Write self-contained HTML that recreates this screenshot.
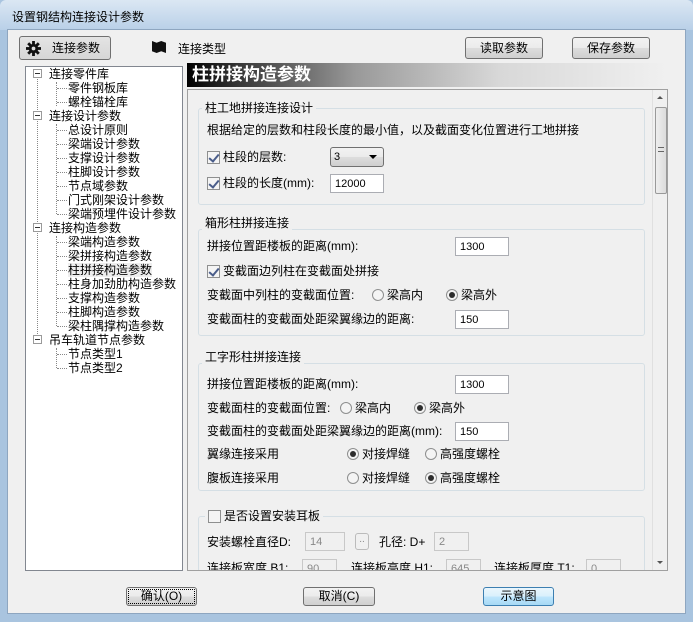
<!DOCTYPE html><html><head><meta charset="utf-8"><style>
*{box-sizing:border-box;margin:0;padding:0}
body{width:693px;height:622px;position:relative;overflow:hidden;background:#a9c4df;font-family:"Liberation Sans","Noto Sans CJK SC",sans-serif;font-size:12px;color:#000}
.a{position:absolute;white-space:nowrap}
.btn{position:absolute;border:1px solid #707070;border-radius:3px;background:linear-gradient(#f2f2f2,#ebebeb 50%,#dddddd 51%,#cfcfcf);text-align:center;font-size:12px}
.in{position:absolute;background:#fff;border:1px solid #abadb3;height:19px;padding:3px 4px;font-size:11px;line-height:12px}
.dis{background:#f0f0f0;color:#888;border-color:#c8c8c8}
.gb{position:absolute;border:1px solid #d5dfe5;border-radius:3px}
.gl{position:absolute;background:#f0f0f0;padding:0 3px;white-space:nowrap;display:flex;align-items:center;line-height:14px}
.cb{display:inline-block;flex:none;width:13px;height:13px;border:1px solid #8e8f8f;background:#f4f4f4;margin-right:3px;position:relative}
.cb.on:after{content:"";position:absolute;left:3px;top:0px;width:4px;height:8px;border:solid #4a5d8a;border-width:0 2px 2px 0;transform:rotate(40deg)}
.rd{display:inline-block;flex:none;width:12px;height:12px;border:1px solid #8e8f8f;border-radius:50%;background:#f4f4f4;margin-right:3px;position:relative}
.rd.on:after{content:"";position:absolute;left:2px;top:2px;width:6px;height:6px;border-radius:50%;background:#2d2d2d}
.t{position:absolute;white-space:nowrap;line-height:14px;display:flex;align-items:center}
</style></head><body>
<div class="a" style="left:0;top:0;width:693px;height:30px;background:linear-gradient(#dbe7f3,#b9d0e8);border-radius:6px 6px 0 0"></div>
<div class="a" style="left:12px;top:8px;font-size:12px">设置钢结构连接设计参数</div>
<div class="a" style="left:7px;top:29px;width:679px;height:585px;background:#f0f0f0;border:1px solid #8ea6c0"></div>
<div class="btn" style="left:19px;top:36px;width:92px;height:24px;background:linear-gradient(#e4e4e4,#d6d6d6);line-height:22px;padding-left:22px">连接参数</div>
<svg class="a" style="left:26px;top:41px" width="15" height="15" viewBox="0 0 16 16"><g fill="#111"><circle cx="8" cy="8" r="5"/><rect x="6.5" y="0" width="3" height="16"/><rect x="0" y="6.5" width="16" height="3"/><rect x="6.5" y="0" width="3" height="16" transform="rotate(45 8 8)"/><rect x="6.5" y="0" width="3" height="16" transform="rotate(-45 8 8)"/></g><circle cx="8" cy="8" r="2" fill="#ddd"/></svg>
<div class="a" style="left:152px;top:41px;width:14px;height:12px;background:#111;clip-path:polygon(0 0,33% 15%,66% 0,100% 15%,100% 100%,66% 85%,33% 100%,0 85%)"></div>
<div class="a" style="left:178px;top:40px">连接类型</div>
<div class="btn" style="left:465px;top:37px;width:78px;height:22px;line-height:20px">读取参数</div>
<div class="btn" style="left:572px;top:37px;width:78px;height:22px;line-height:20px">保存参数</div>
<div class="a" style="left:25px;top:66px;width:158px;height:505px;background:#fff;border:1px solid #828790"></div>
<div class="a" style="left:37px;top:76px;height:262px;border-left:1px dotted #888"></div>
<div class="a" style="left:56px;top:82px;height:24px;border-left:1px dotted #888"></div>
<div class="a" style="left:56px;top:124px;height:90px;border-left:1px dotted #888"></div>
<div class="a" style="left:56px;top:236px;height:90px;border-left:1px dotted #888"></div>
<div class="a" style="left:56px;top:348px;height:20px;border-left:1px dotted #888"></div>
<div id="tree"></div>
<script>
var it=[[0,"连接零件库"],[1,"零件钢板库"],[1,"螺栓锚栓库"],[0,"连接设计参数"],[1,"总设计原则"],[1,"梁端设计参数"],[1,"支撑设计参数"],[1,"柱脚设计参数"],[1,"节点域参数"],[1,"门式刚架设计参数"],[1,"梁端预埋件设计参数"],[0,"连接构造参数"],[1,"梁端构造参数"],[1,"梁拼接构造参数"],[1,"柱拼接构造参数"],[1,"柱身加劲肋构造参数"],[1,"支撑构造参数"],[1,"柱脚构造参数"],[1,"梁柱隅撑构造参数"],[0,"吊车轨道节点参数"],[1,"节点类型1"],[1,"节点类型2"]];
var h="";it.forEach(function(e,i){var y=67+i*14;if(e[0]==0){h+='<div class="a" style="left:33px;top:'+(y+2)+'px;width:9px;height:9px;border:1px solid #9a9a9a;background:#fff"><div class="a" style="left:1px;top:3px;width:5px;border-top:1px solid #333"></div></div><div class="t" style="left:49px;top:'+y+'px">'+e[1]+'</div>';}else{h+='<div class="a" style="left:57px;top:'+(y+7)+'px;width:10px;border-top:1px dotted #888"></div><div class="t" style="left:68px;top:'+y+'px;'+(i==14?'background:#eee':'')+'">'+e[1]+'</div>';}});document.getElementById("tree").innerHTML=h;
</script>
<div class="a" style="left:187px;top:63px;width:480px;height:24px;background:linear-gradient(90deg,#000 0,#333 10%,#999 35%,#d8d8d8 65%,#f0f0f0);color:#fff;font-size:17px;font-weight:bold;line-height:24px;padding-left:5px">柱拼接构造参数</div>
<div class="a" style="left:187px;top:89px;width:481px;height:482px;border:1px solid #a0a0a0;overflow:hidden">
<div class="a" style="left:464px;top:0;width:16px;height:480px;background:#f0f0f0;border-left:1px solid #e0e0e0"></div>
<div class="a" style="left:469px;top:6px;width:0;height:0;border:3px solid transparent;border-bottom:3px solid #555;border-top:0"></div>
<div class="a" style="left:467px;top:17px;width:12px;height:87px;border:1px solid #999;border-radius:2px;background:linear-gradient(90deg,#eee,#dcdcdc)"></div>
<div class="a" style="left:470px;top:57px;width:6px;height:5px;border-top:1px solid #666;border-bottom:1px solid #666"></div>
<div class="a" style="left:469px;top:471px;width:0;height:0;border:3px solid transparent;border-top:3px solid #555;border-bottom:0"></div>
</div>
<div class="gb" style="left:198px;top:108px;width:447px;height:97px"></div><div class="gl" style="left:202px;top:101px">柱工地拼接连接设计</div>
<div class="t" style="left:207px;top:123px">根据给定的层数和柱段长度的最小值，以及截面变化位置进行工地拼接</div>
<div class="t" style="left:207px;top:150px"><span class="cb on"></span>柱段的层数:</div>
<div class="btn" style="left:330px;top:147px;width:54px;height:20px;text-align:left;padding-left:3px;line-height:18px;font-size:11px">3<span style="position:absolute;right:6px;top:7px;border:4px solid transparent;border-top:4px solid #000;border-bottom:0"></span></div>
<div class="t" style="left:207px;top:176px"><span class="cb on"></span>柱段的长度(mm):</div>
<div class="in" style="left:330px;top:174px;width:54px">12000</div>
<div class="gb" style="left:198px;top:229px;width:447px;height:107px"></div><div class="gl" style="left:202px;top:216px">箱形柱拼接连接</div>
<div class="t" style="left:207px;top:239px">拼接位置距楼板的距离(mm):</div><div class="in" style="left:455px;top:237px;width:54px">1300</div>
<div class="t" style="left:207px;top:264px"><span class="cb on"></span>变截面边列柱在变截面处拼接</div>
<div class="t" style="left:207px;top:288px">变截面中列柱的变截面位置:</div>
<div class="t" style="left:372px;top:288px"><span class="rd"></span>梁高内</div><div class="t" style="left:446px;top:288px"><span class="rd on"></span>梁高外</div>
<div class="t" style="left:207px;top:312px">变截面柱的变截面处距梁翼缘边的距离:</div><div class="in" style="left:455px;top:310px;width:54px">150</div>
<div class="gb" style="left:198px;top:363px;width:447px;height:128px"></div><div class="gl" style="left:202px;top:350px">工字形柱拼接连接</div>
<div class="t" style="left:207px;top:377px">拼接位置距楼板的距离(mm):</div><div class="in" style="left:455px;top:375px;width:54px">1300</div>
<div class="t" style="left:207px;top:401px">变截面柱的变截面位置:</div>
<div class="t" style="left:340px;top:401px"><span class="rd"></span>梁高内</div><div class="t" style="left:414px;top:401px"><span class="rd on"></span>梁高外</div>
<div class="t" style="left:207px;top:424px">变截面柱的变截面处距梁翼缘边的距离(mm):</div><div class="in" style="left:455px;top:422px;width:54px">150</div>
<div class="t" style="left:207px;top:447px">翼缘连接采用</div>
<div class="t" style="left:347px;top:447px"><span class="rd on"></span>对接焊缝</div><div class="t" style="left:425px;top:447px"><span class="rd"></span>高强度螺栓</div>
<div class="t" style="left:207px;top:471px">腹板连接采用</div>
<div class="t" style="left:347px;top:471px"><span class="rd"></span>对接焊缝</div><div class="t" style="left:425px;top:471px"><span class="rd on"></span>高强度螺栓</div>
<div class="a" style="left:188px;top:500px;width:463px;height:70px;overflow:hidden">
<div class="gb" style="left:10px;top:16px;width:447px;height:80px"></div><div class="gl" style="left:17px;top:9px"><span class="cb"></span>是否设置安装耳板</div>
<div class="t" style="left:19px;top:35px">安装螺栓直径D:</div><div class="in dis" style="left:117px;top:32px;width:40px">14</div>
<div class="btn" style="left:167px;top:33px;width:14px;height:17px;line-height:12px;font-size:10px;background:#f0f0f0;border-color:#bbb;color:#888">..</div>
<div class="t" style="left:191px;top:35px">孔径: D+</div><div class="in dis" style="left:246px;top:32px;width:35px">2</div>
<div class="t" style="left:19px;top:61px">连接板宽度 B1:</div><div class="in dis" style="left:114px;top:59px;width:35px">90</div>
<div class="t" style="left:163px;top:61px">连接板高度 H1:</div><div class="in dis" style="left:258px;top:59px;width:35px">645</div>
<div class="t" style="left:306px;top:61px">连接板厚度 T1:</div><div class="in dis" style="left:398px;top:59px;width:35px">0</div>
</div>
<div class="btn" style="left:126px;top:587px;width:71px;height:19px;line-height:17px;outline:1px dotted #000;outline-offset:-3px">确认(O)</div>
<div class="btn" style="left:303px;top:587px;width:72px;height:19px;line-height:17px">取消(C)</div>
<div class="btn" style="left:483px;top:587px;width:71px;height:19px;line-height:17px;border-color:#3c7fb1;background:linear-gradient(#eaf6fd,#d9f0fc 50%,#bee6fd 51%,#a7d9f5)">示意图</div>
</body></html>
